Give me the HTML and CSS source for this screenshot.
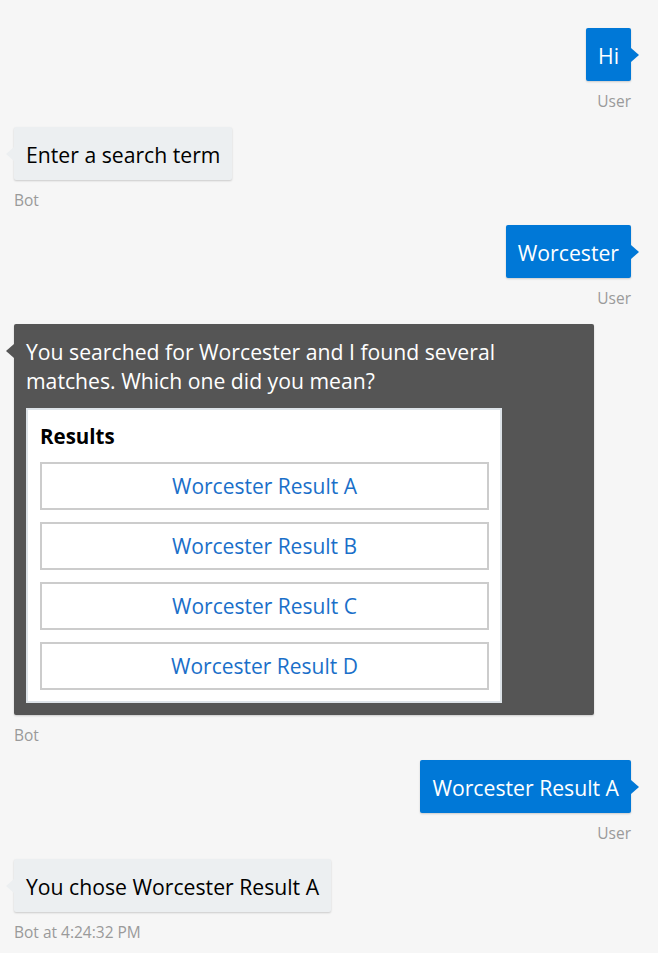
FILE: index.html
```html
<!DOCTYPE html>
<html>
<head>
<meta charset="utf-8">
<link rel="stylesheet" href="styles.css">
</head>
<body>
<div class="chat">
  <div class="msg user">
    <div class="bubble">Hi<svg class="callout" viewBox="0 0 8 14"><path d="M0 0 L8 7 L0 14 Z"/></svg></div>
    <div class="meta">User</div>
  </div>
  <div class="msg bot">
    <div class="bubble">Enter a search term<svg class="callout" viewBox="0 0 8 14"><path d="M8 0 L0 7 L8 14 Z"/></svg></div>
    <div class="meta">Bot</div>
  </div>
  <div class="msg user">
    <div class="bubble">Worcester<svg class="callout" viewBox="0 0 8 14"><path d="M0 0 L8 7 L0 14 Z"/></svg></div>
    <div class="meta">User</div>
  </div>
  <div class="msg bot">
    <div class="bubble dark">
      <svg class="callout" viewBox="0 0 8 14"><path d="M8 0 L0 7 L8 14 Z"/></svg>
      <p class="dark-text">You searched for Worcester and I found several matches. Which one did you mean?</p>
      <div class="card">
        <div class="card-title">Results</div>
        <button class="choice">Worcester Result A</button>
        <button class="choice">Worcester Result B</button>
        <button class="choice">Worcester Result C</button>
        <button class="choice">Worcester Result D</button>
      </div>
    </div>
    <div class="meta">Bot</div>
  </div>
  <div class="msg user">
    <div class="bubble">Worcester Result A<svg class="callout" viewBox="0 0 8 14"><path d="M0 0 L8 7 L0 14 Z"/></svg></div>
    <div class="meta">User</div>
  </div>
  <div class="msg bot">
    <div class="bubble">You chose Worcester Result A<svg class="callout" viewBox="0 0 8 14"><path d="M8 0 L0 7 L8 14 Z"/></svg></div>
    <div class="meta">Bot at 4:24:32 PM</div>
  </div>
</div>
</body>
</html>
```
FILE: styles.css
```css
html, body {
  margin: 0;
  padding: 0;
  background: #f6f6f6;
}
body {
  font-family: "Open Sans", "Noto Sans", sans-serif;
  color: #000;
}
.chat {
  display: flex;
  flex-direction: column;
  padding: 28px 27px 0 14px;
}
.msg {
  display: flex;
  flex-direction: column;
  margin-bottom: 15.5px;
}
.msg.user { align-items: flex-end; }
.msg.bot { align-items: flex-start; }
.bubble {
  position: relative;
  font-size: 21.2px;
  line-height: 29px;
  padding: 13px 12px 11px;
  border-radius: 2px;
  box-shadow: 0 1px 2px rgba(0,0,0,0.18);
}
.user .bubble {
  background: #0078d7;
  color: #fff;
}
.bot .bubble {
  background: #eceff1;
  color: #000;
}
.callout {
  position: absolute;
  top: 20px;
  width: 8px;
  height: 14px;
}
.user .callout { right: -8px; fill: #0078d7; }
.bot .callout { left: -8px; fill: #eceff1; }
.bot .bubble.dark {
  background: #555555;
  color: #fff;
  width: 580px;
  box-sizing: border-box;
  padding: 13px 12px 12px;
}
.bot .dark .callout { fill: #555555; }
.dark-text {
  margin: 0 0 13px;
  max-width: 490px;
}
.card {
  background: #fff;
  border: 2px solid #dde3e8;
  width: 476px;
  box-sizing: border-box;
  padding: 12px 11px 11px 12px;
  display: flex;
  flex-direction: column;
  gap: 12px;
}
.card-title {
  font-weight: 700;
  font-size: 20.5px;
  line-height: 28px;
  color: #000;
}
.choice {
  height: 48px;
  background: #fff;
  border: 2px solid #cccccc;
  font-family: inherit;
  font-size: 21px;
  color: #1a6fc9;
  padding: 0;
  cursor: pointer;
}
.meta {
  font-size: 15.5px;
  line-height: 20px;
  color: #9a9a9a;
  margin-top: 10px;
}
```
